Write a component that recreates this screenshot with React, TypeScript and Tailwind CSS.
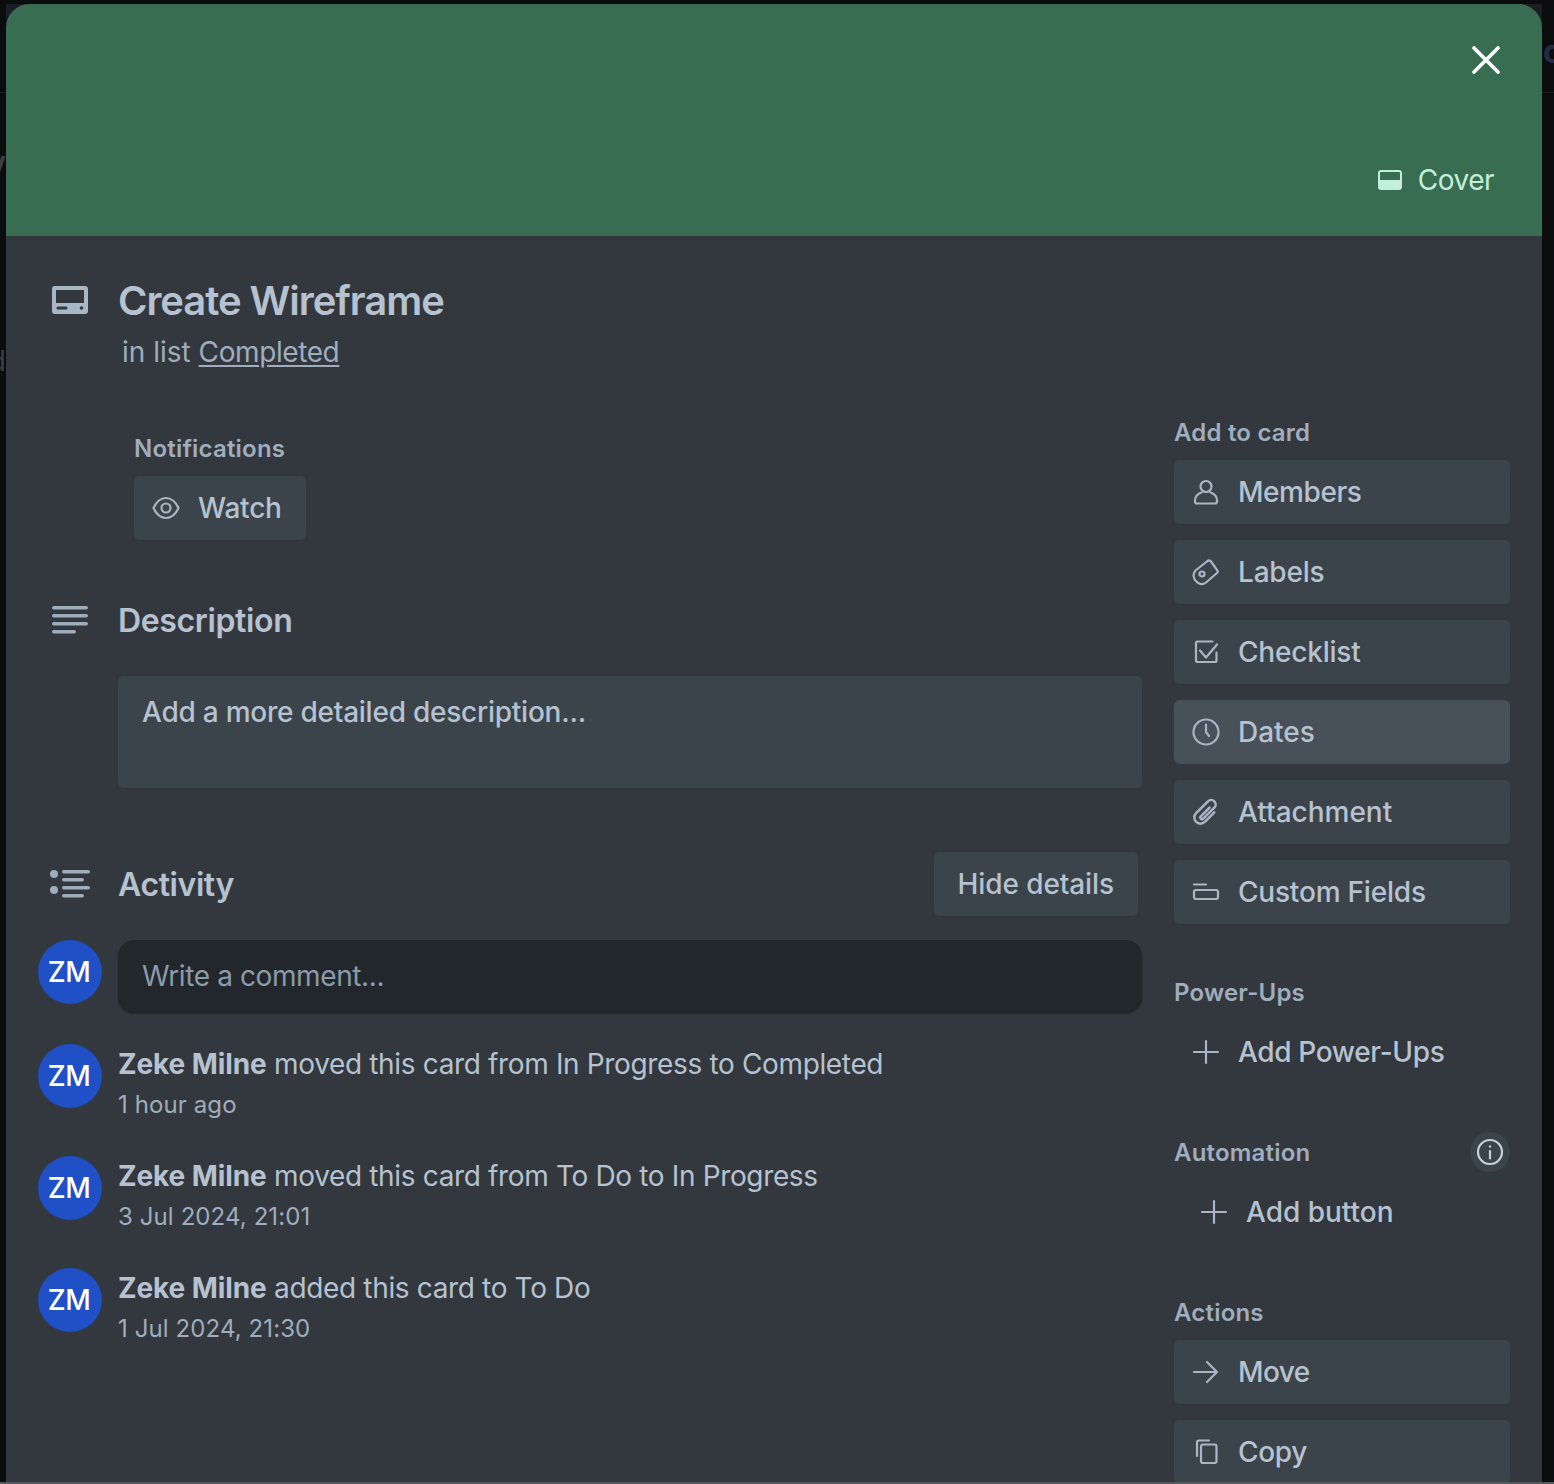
import type { ReactNode } from "react";

const CardIcon = () => (
  <svg width="36" height="28" viewBox="0 0 36 28" fill="none">
    <path
      fillRule="evenodd"
      clipRule="evenodd"
      d="M3 0h30a3 3 0 0 1 3 3v22a3 3 0 0 1-3 3H3a3 3 0 0 1-3-3V3a3 3 0 0 1 3-3Zm1 4v13h28V4H4Zm2 16.500a1.500 1.500 0 0 0 0 3h8a1.500 1.500 0 0 0 0-3H6Zm23.500-.300a1.800 1.800 0 1 0 0 3.600 1.800 1.800 0 0 0 0-3.600Z"
      fill="currentColor"
    />
  </svg>
);

const DescriptionIcon = () => (
  <svg width="36" height="28" viewBox="0 0 36 28" fill="currentColor">
    <rect x="0" y="0" width="36" height="3.600" rx="1.800" />
    <rect x="0" y="8" width="36" height="3.600" rx="1.800" />
    <rect x="0" y="16" width="36" height="3.600" rx="1.800" />
    <rect x="0" y="24" width="24" height="3.600" rx="1.800" />
  </svg>
);

const ActivityIcon = () => (
  <svg width="40" height="28" viewBox="0 0 40 28" fill="currentColor">
    <circle cx="4" cy="4" r="4" />
    <circle cx="4" cy="20" r="4" />
    <rect x="12" y="0" width="28" height="3.600" rx="1.800" />
    <rect x="12" y="8" width="22" height="3.600" rx="1.800" />
    <rect x="12" y="16" width="28" height="3.600" rx="1.800" />
    <rect x="12" y="24" width="22" height="3.600" rx="1.800" />
  </svg>
);

const CoverIcon = () => (
  <svg width="24" height="20" viewBox="0 0 24 20" fill="none">
    <rect x="1" y="1" width="22" height="18" rx="2" stroke="currentColor" strokeWidth="2" />
    <path d="M1 10h22v7a2 2 0 0 1-2 2H3a2 2 0 0 1-2-2v-7Z" fill="currentColor" />
  </svg>
);

const Icon = ({ children }: { children: ReactNode }) => (
  <svg
    width="28"
    height="28"
    viewBox="0 0 28 28"
    fill="none"
    stroke="currentColor"
    strokeWidth="2.200"
    strokeLinecap="round"
    strokeLinejoin="round"
    className="shrink-0 text-[#a9b6c5]"
  >
    {children}
  </svg>
);

const icons: Record<string, ReactNode> = {
  eye: (
    <Icon>
      <path d="M1.500 14C4.500 7.500 9 4 14 4s9.500 3.500 12.500 10c-3 6.500-7.500 10-12.500 10S4.500 20.500 1.500 14Z" />
      <circle cx="14" cy="14" r="4.500" />
    </Icon>
  ),
  person: (
    <Icon>
      <circle cx="14" cy="8.500" r="5.500" />
      <path d="M9.500 14.500C5.500 15.800 3 18.800 3 22.500v1a2 2 0 0 0 2 2h18a2 2 0 0 0 2-2v-1c0-3.700-2.500-6.700-6.500-8" />
    </Icon>
  ),
  tag: (
    <Icon>
      <path d="M3.500 12.500 15.500 3a2.500 2.500 0 0 1 3.500.5l6.300 8.800a2 2 0 0 1-.3 2.700L14 24.500a6.500 6.500 0 0 1-9.500-1 7.500 7.500 0 0 1-1-11Z" />
      <circle cx="10" cy="16" r="2.500" />
    </Icon>
  ),
  check: (
    <Icon>
      <path d="M24.500 14.500v8a1.500 1.500 0 0 1-1.500 1.500H5.500A1.500 1.500 0 0 1 4 22.500V5a1.500 1.500 0 0 1 1.500-1.500h15" />
      <path d="m8 12.500 6 7 11-13" />
    </Icon>
  ),
  clock: (
    <Icon>
      <circle cx="14" cy="14" r="12.500" />
      <path d="M14 6.500v7.500l3 4" />
    </Icon>
  ),
  clip: (
    <Icon>
      <g transform="rotate(45 14 14) scale(1.120) translate(-1.500 -1.500)">
        <path d="M19.500 9v12a5.500 5.500 0 0 1-11 0V6a4 4 0 0 1 8 0v14a1.500 1.500 0 0 1-3 0V9" />
      </g>
    </Icon>
  ),
  fields: (
    <Icon>
      <path d="M2 6.500h12" />
      <rect x="2" y="12" width="24" height="9" rx="2" />
    </Icon>
  ),
  plus: (
    <Icon>
      <path d="M14 3v22M2 14h24" />
    </Icon>
  ),
  arrow: (
    <Icon>
      <path d="M2 14h23M15 4l10 10-10 10" />
    </Icon>
  ),
  copy: (
    <Icon>
      <rect x="9" y="6.500" width="15.500" height="18.500" rx="2" />
      <path d="M5 18V4.500a2 2 0 0 1 2-2h10" />
    </Icon>
  ),
};

const SideButton = ({
  icon,
  label,
  active,
  tracking = "tracking-[-0.2px]",
}: {
  icon: string;
  label: string;
  active?: boolean;
  tracking?: string;
}) => (
  <div
    className={`flex h-16 items-center gap-[18px] rounded-md pl-[18px] text-[28px] font-medium ${
      active ? "bg-[#48505a]" : "bg-[#3c444b]"
    }`}
  >
    {icons[icon]}
    <span className={tracking}>{label}</span>
  </div>
);

const SideHeading = ({ children }: { children: ReactNode }) => (
  <h3 className="mb-[11px] h-8 text-[24px] leading-8 font-semibold tracking-[0.2px] text-[#9fadbc]">{children}</h3>
);

const Avatar = () => (
  <div className="flex size-16 shrink-0 items-center justify-center rounded-full bg-[#1f50c6] pr-[2px] text-[28px] font-medium tracking-[-0.5px] text-white">
    ZM
  </div>
);

const activity = [
  { text: "moved this card from In Progress to Completed", time: "1 hour ago" },
  { text: "moved this card from To Do to In Progress", time: "3 Jul 2024, 21:01" },
  { text: "added this card to To Do", time: "1 Jul 2024, 21:30" },
];

export default function App() {
  return (
    <div className="relative h-[1484px] overflow-hidden bg-[#0b0c0d] font-['Inter',sans-serif] text-[#b6c2cf]">
      {/* Board behind the modal */}
      <div className="absolute top-[92px] left-0 h-px w-full bg-[#191b1e]" />
      <span className="absolute top-[32px] left-[1543px] text-[32px] leading-10 font-bold text-[#232c45]">c</span>
      <div className="absolute top-[140px] left-0 h-[240px] w-[6px] overflow-hidden text-[28px] leading-8 font-bold text-[#3c3e40]">
        <span className="absolute top-[6px] right-0">v</span>
        <span className="absolute top-[205px] right-0 font-normal">d</span>
      </div>
      <div className="absolute bottom-0 left-0 h-[2px] w-full bg-[#55595c]" />

      <div className="relative mt-1 ml-[6px] h-[1478px] w-[1536px] bg-[#1b1e23]">
        <div className="h-full overflow-hidden rounded-t-[24px] bg-[#33383f]">
          {/* Cover */}
          <div className="relative h-[232px] bg-[#396d52]">
            <svg
              className="absolute top-[42px] right-[42px] text-white"
              width="28"
              height="28"
              viewBox="0 0 28 28"
              fill="none"
              stroke="currentColor"
              strokeWidth="3.600"
              strokeLinecap="round"
            >
              <path d="M2 2l24 24M26 2 2 26" />
            </svg>
            <div className="absolute right-[48px] bottom-[36px] flex items-center gap-4 text-[28px] leading-10 tracking-[-0.5px] text-[#c3efd9]">
              <CoverIcon />
              <span>Cover</span>
            </div>
          </div>

          {/* Title */}
          <div className="relative h-[181px] pt-[41px] pl-28">
            <div className="absolute top-[50px] left-[46px] text-[#a9b6c5]">
              <CardIcon />
            </div>
            <h2 className="text-[40px] leading-12 font-semibold tracking-[-1.05px]">Create Wireframe</h2>
            <p className="mt-[9px] pl-1 text-[28px] leading-9 text-[#9fadbc]">
              in list{" "}
              <span className="tracking-[-0.4px] underline underline-offset-[3px]">Completed</span>
            </p>
          </div>

          <div className="flex gap-8 px-8">
            {/* Main column */}
            <div className="w-[1104px] shrink-0">
              <div className="pl-24">
                <div className="mt-[16px] h-8 text-[24px] leading-8 font-semibold tracking-[0.2px] text-[#9fadbc]">
                  Notifications
                </div>
                <div className="mt-[11px] flex h-16 w-[172px] items-center gap-[18px] rounded-md bg-[#3c444b] pl-[18px] text-[28px] font-medium tracking-[-0.2px]">
                  {icons.eye}
                  <span>Watch</span>
                </div>
              </div>

              <div className="relative mt-[61px] flex h-10 items-center pl-20">
                <div className="absolute top-[5px] left-[14px] text-[#9fadbc]">
                  <DescriptionIcon />
                </div>
                <h3 className="text-[32px] leading-10 font-semibold tracking-[-0.36px]">Description</h3>
              </div>
              <div className="mt-[35px] ml-20 h-[112px] rounded-md bg-[#3c444b] px-6 pt-4 text-[28px] leading-10 font-medium tracking-[-0.24px]">
                Add a more detailed description...
              </div>

              <div className="relative mt-16 flex h-16 items-center justify-between pr-1 pl-20">
                <div className="absolute top-[18px] left-3 text-[#9fadbc]">
                  <ActivityIcon />
                </div>
                <h3 className="pt-[2px] text-[32px] leading-10 font-semibold tracking-[-0.4px]">Activity</h3>
                <div className="flex h-16 items-center rounded-md bg-[#3c444b] px-6 text-[28px] font-medium tracking-[-0.1px]">
                  Hide details
                </div>
              </div>

              <div className="mt-6 flex gap-4">
                <Avatar />
                <div className="flex h-[72px] flex-1 items-center rounded-2xl bg-[#22272b] pl-6 text-[28px] tracking-[-0.39px] text-[#8c9bab] shadow-[0_2px_2px_rgba(0,0,0,0.35)]">
                  Write a comment...
                </div>
              </div>

              <div className="mt-8 flex flex-col gap-8">
                {activity.map((item) => (
                  <div key={item.time} className="flex h-20 gap-4">
                    <Avatar />
                    <div>
                      <p className="text-[28px] leading-10 tracking-[-0.35px] text-[#b6c2cf]">
                        <span className="font-bold tracking-[-0.1px]">Zeke Milne</span> {item.text}
                      </p>
                      <p className="mt-px text-[24px] leading-10 tracking-[0.1px] text-[#9fadbc]">{item.time}</p>
                    </div>
                  </div>
                ))}
              </div>
            </div>

            {/* Sidebar */}
            <div className="w-[336px] shrink-0">
              <SideHeading>Add to card</SideHeading>
              <div className="flex flex-col gap-4">
                <SideButton icon="person" label="Members" tracking="tracking-[-0.45px]" />
                <SideButton icon="tag" label="Labels" />
                <SideButton icon="check" label="Checklist" />
                <SideButton icon="clock" label="Dates" tracking="tracking-normal" active />
                <SideButton icon="clip" label="Attachment" tracking="tracking-normal" />
                <SideButton icon="fields" label="Custom Fields" />
              </div>

              <div className="mt-[53px]">
                <SideHeading>Power-Ups</SideHeading>
                <div className="flex h-16 items-center gap-[18px] pl-[18px] text-[28px] font-medium tracking-[-0.35px]">
                  {icons.plus}
                  <span>Add Power-Ups</span>
                </div>
              </div>

              <div className="relative mt-[53px]">
                <SideHeading>Automation</SideHeading>
                <div className="absolute -top-[5px] right-0 flex size-10 items-center justify-center rounded-full bg-[#3c444b] text-[#c7d1db]">
                  <svg width="28" height="28" viewBox="0 0 28 28" fill="none" stroke="currentColor" strokeWidth="2.200" strokeLinecap="round">
                    <circle cx="14" cy="14" r="12" />
                    <path d="M14 13v7.500" />
                    <circle cx="14" cy="8.500" r="1.200" fill="currentColor" stroke="none" />
                  </svg>
                </div>
                <div className="flex h-16 items-center gap-[18px] pl-[26px] text-[28px] font-medium">
                  {icons.plus}
                  <span>Add button</span>
                </div>
              </div>

              <div className="mt-[53px]">
                <SideHeading>Actions</SideHeading>
                <div className="flex flex-col gap-4">
                  <SideButton icon="arrow" label="Move" tracking="tracking-[-0.6px]" />
                  <SideButton icon="copy" label="Copy" tracking="tracking-[-0.3px]" />
                </div>
              </div>
            </div>
          </div>
        </div>
      </div>
    </div>
  );
}
